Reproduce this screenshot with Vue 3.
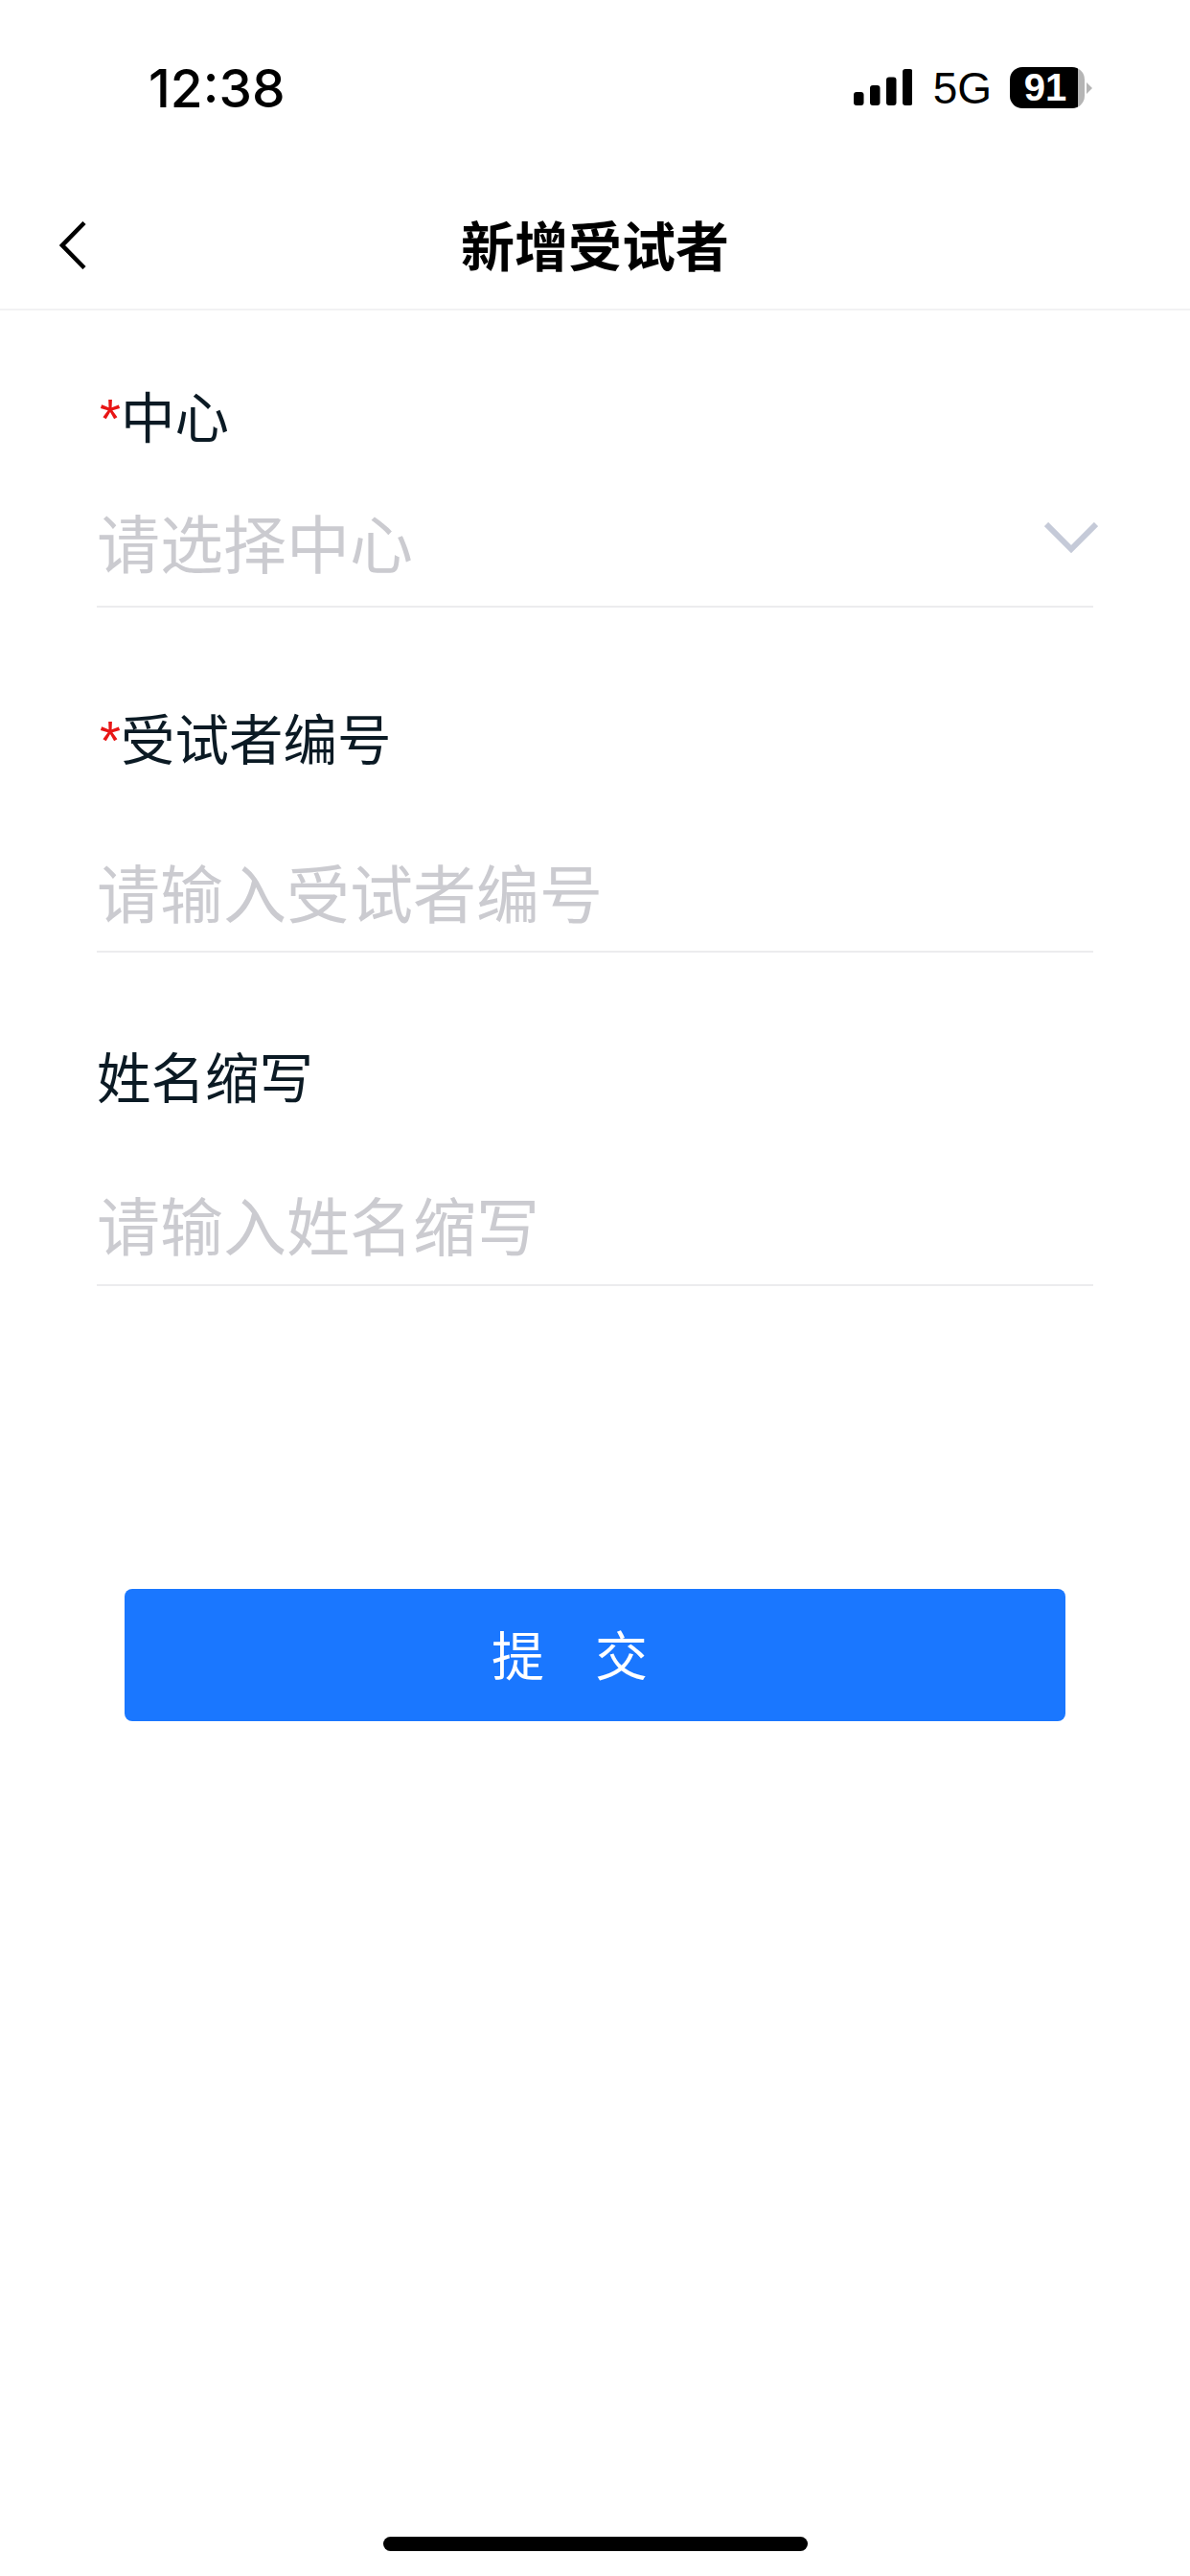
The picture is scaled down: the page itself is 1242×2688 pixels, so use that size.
<template>
  <div class="page">
    <header class="status">
      <span class="time">12:38</span>
      <div class="status-right">
        <svg class="signal" width="61" height="38" viewBox="0 0 61 38">
          <rect x="0" y="24" width="10.5" height="14" rx="3" />
          <rect x="17" y="17" width="10.5" height="21" rx="3" />
          <rect x="34" y="8.5" width="10.5" height="29.5" rx="3" />
          <rect x="51" y="0" width="10.5" height="38" rx="3" />
        </svg>
        <span class="net">5G</span>
        <div class="battery">
          <div class="battery-body">
            <span class="battery-num">91</span>
          </div>
          <i class="battery-nub"></i>
        </div>
      </div>
    </header>

    <nav class="navbar">
      <svg class="back" width="28" height="50" viewBox="0 0 28 50">
        <path d="M26 1.5 L3 25 L26 48.5" fill="none" stroke="#000" stroke-width="4.5" />
      </svg>
      <h1 class="title">新增受试者</h1>
    </nav>

    <form class="form" @submit.prevent>
      <div v-for="f in fields" :key="f.label" class="field" :class="f.cls">
        <label class="label"><span v-if="f.required" class="star">*</span>{{ f.label }}</label>
        <div class="control">
          <span class="placeholder">{{ f.placeholder }}</span>
          <svg v-if="f.select" class="arrow" width="56" height="32" viewBox="0 0 56 32">
            <path d="M2 2 L28 28 L54 2" fill="none" stroke="#c5cad8" stroke-width="6" />
          </svg>
        </div>
      </div>

      <button class="submit" type="submit">提交</button>
    </form>

    <div class="home-wrap"><div class="home"></div></div>
  </div>
</template>

<script setup>
const fields = [
  { label: '中心', placeholder: '请选择中心', required: true, select: true, cls: 'field-center' },
  { label: '受试者编号', placeholder: '请输入受试者编号', required: true, cls: 'field-code' },
  { label: '姓名缩写', placeholder: '请输入姓名缩写', cls: 'field-name' },
]
</script>

<style>
html, body { margin: 0; background: #fff; }
</style>

<style scoped>
.page {
  width: 1242px;
  height: 2688px;
  display: flex;
  flex-direction: column;
  background: #fff;
  font-family: "Noto Sans CJK SC", "Liberation Sans", sans-serif;
  overflow: hidden;
}
.status {
  height: 190px;
  box-sizing: border-box;
  display: flex;
  justify-content: space-between;
  padding: 60px 102px 0 155px;
  color: #000;
}
.time {
  font-family: Inter, "Liberation Sans", sans-serif;
  font-size: 55px;
  font-weight: 500;
  line-height: 64px;
}
.status-right {
  display: flex;
  align-items: flex-start;
  padding-top: 10px;
}
.signal { fill: #000; margin: 2px 0 0 0; }
.net {
  font-family: "Liberation Sans", sans-serif;
  font-size: 46px;
  line-height: 44px;
  margin: 0 19px 0 22px;
}
.battery { display: flex; align-items: center; }
.battery-body {
  width: 78px;
  height: 43px;
  box-sizing: border-box;
  border-radius: 13px;
  background: linear-gradient(90deg, #000 0, #000 91%, #b5b5b5 91%, #b5b5b5 100%);
  display: flex;
  justify-content: center;
  align-items: center;
  padding-right: 4px;
}
.battery-num {
  font-family: "Liberation Sans", sans-serif;
  font-size: 40px;
  font-weight: 700;
  color: #fff;
  line-height: 43px;
}
.battery-nub {
  width: 0;
  height: 0;
  margin-left: 2px;
  border-top: 6px solid transparent;
  border-bottom: 6px solid transparent;
  border-left: 6px solid #b5b5b5;
}
.navbar {
  position: relative;
  height: 134px;
  box-sizing: border-box;
  border-bottom: 2px solid #f2f2f3;
  padding-bottom: 5px;
  display: flex;
  align-items: center;
  justify-content: center;
}
.back { position: absolute; left: 62px; top: 41px; }
.title {
  margin: 0;
  font-size: 56px;
  font-weight: 700;
  line-height: 80px;
  color: #000;
}
.form {
  padding: 68px 101px 0;
  display: flex;
  flex-direction: column;
}
.label {
  display: block;
  font-size: 56.5px;
  line-height: 80px;
  color: #0b1a24;
}
.star {
  color: #e81515;
  font-family: "Liberation Sans", sans-serif;
  line-height: 1;
  padding-left: 3px;
}
.control {
  position: relative;
  border-bottom: 2px solid #ececee;
}
.placeholder {
  display: block;
  font-size: 66px;
  line-height: 80px;
  color: #cbcbd0;
}
.arrow { position: absolute; right: -5px; top: 73px; }
.field-center .control { padding: 52px 0 28px; }
.field-code { margin-top: 94px; }
.field-code .control { padding: 81px 0 23px; }
.field-name { margin-top: 87px; }
.field-name .control { padding: 75px 0 24px; }
.submit {
  margin: 316px 29px 0;
  height: 138px;
  border: 0;
  border-radius: 8px;
  background: #1a77ff;
  color: #fff;
  font-family: inherit;
  font-size: 55px;
  letter-spacing: 53px;
  padding: 0 0 6px;
}
.home-wrap {
  margin-top: auto;
  padding-bottom: 26px;
  display: flex;
  justify-content: center;
}
.home {
  width: 443px;
  height: 15px;
  border-radius: 8px;
  background: #000;
}
</style>
